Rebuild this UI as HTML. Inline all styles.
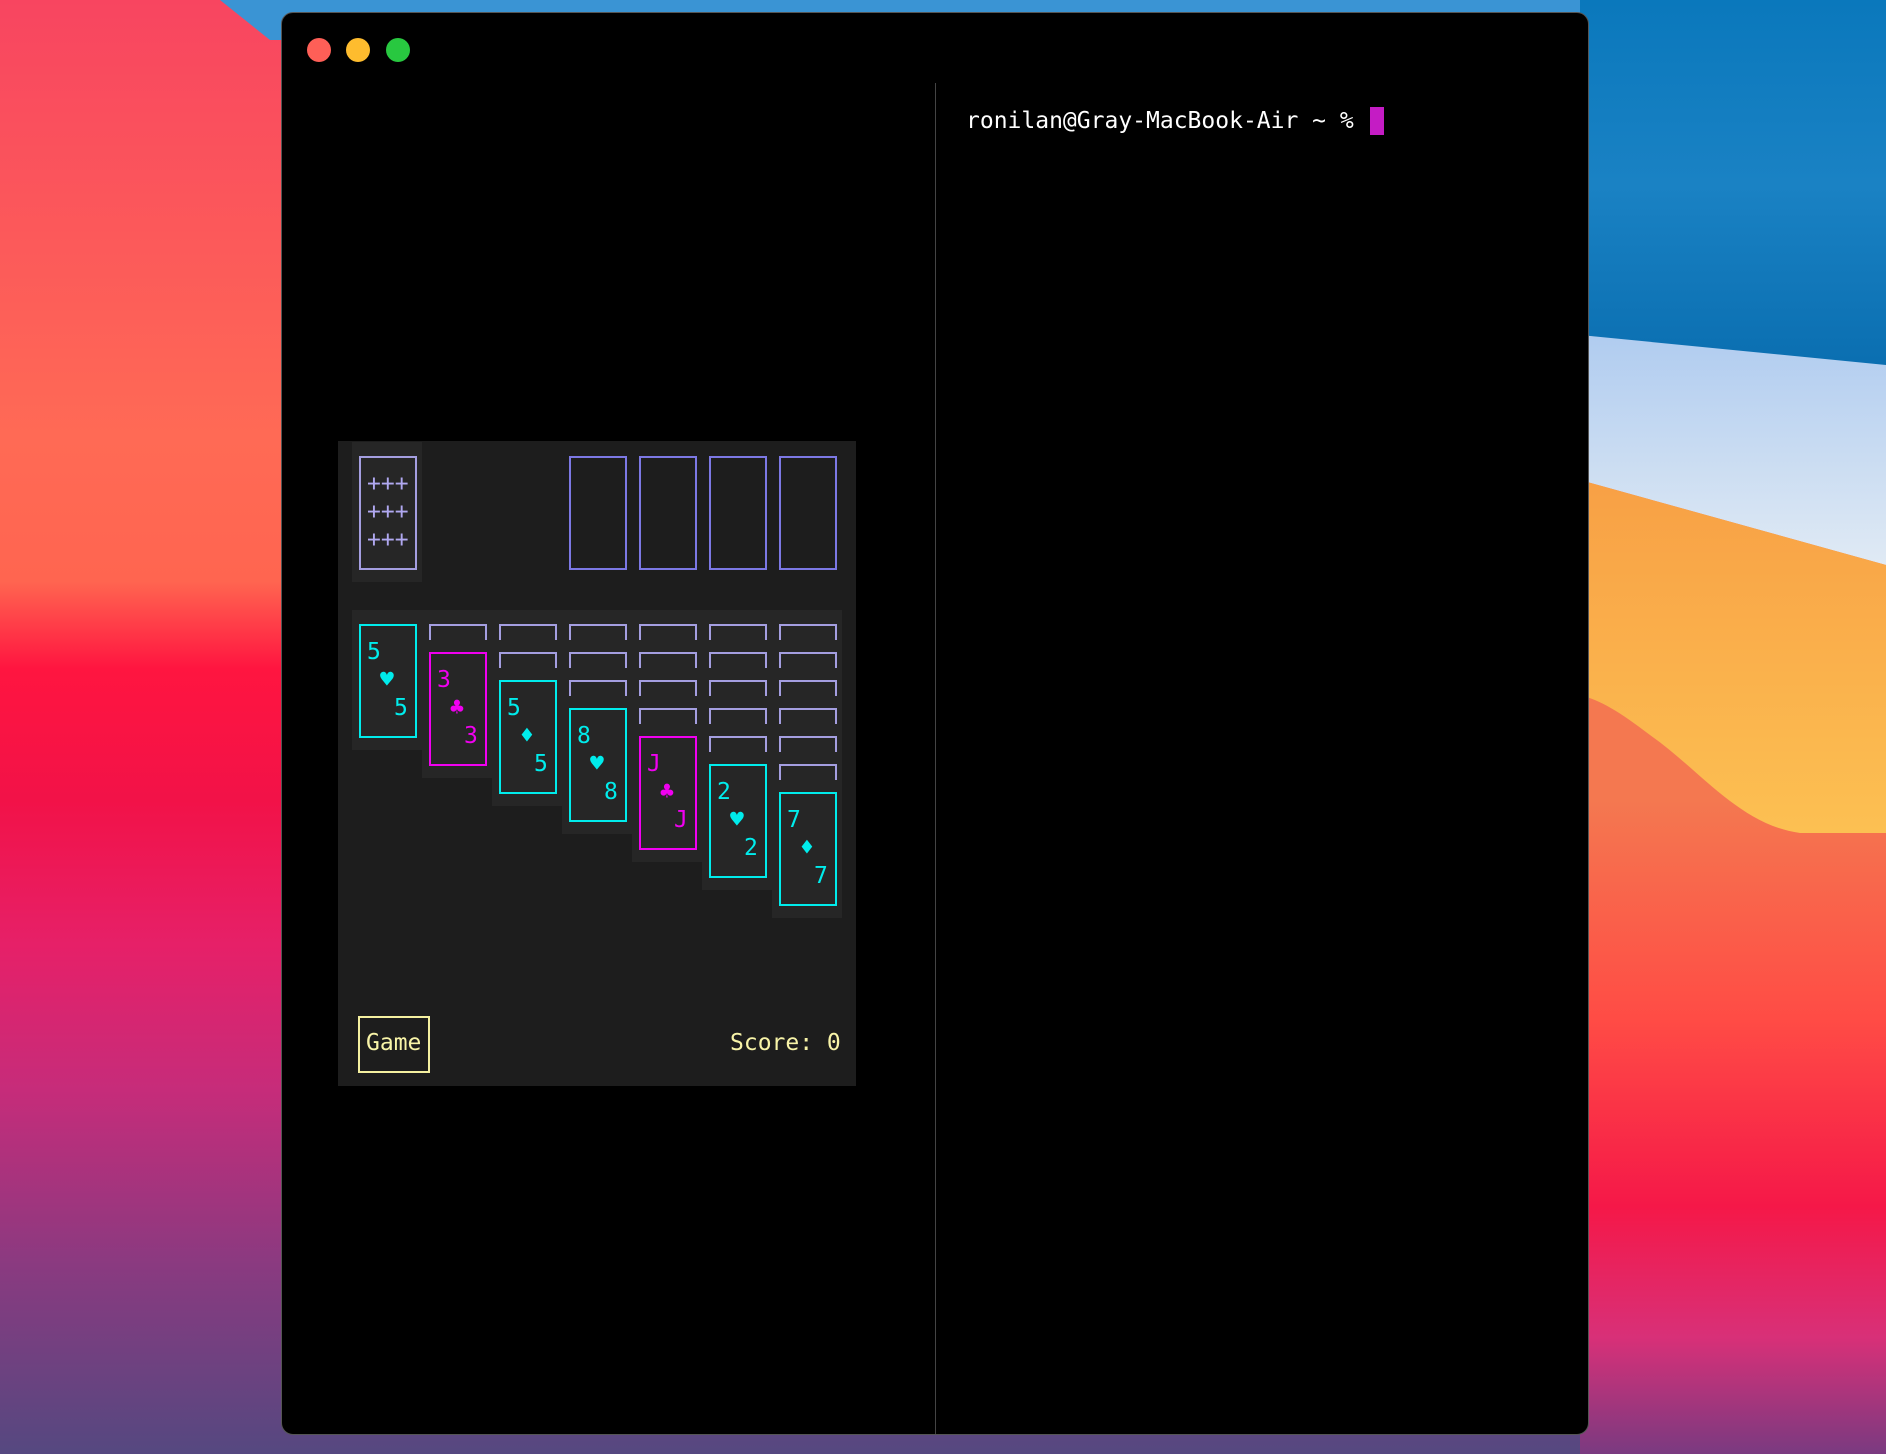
<!DOCTYPE html>
<html><head><meta charset="utf-8"><style>
*{margin:0;padding:0;box-sizing:border-box}
body{width:1886px;height:1454px;position:relative;overflow:hidden;background:#000;font-family:"DejaVu Sans Mono","Liberation Mono",monospace}
.abs{position:absolute}
.win{position:absolute;left:281px;top:12px;width:1308px;height:1423px;background:#000;border-radius:12px;border:1px solid #555;overflow:hidden}
.dot{position:absolute;width:24px;height:24px;border-radius:50%;top:25px}
.panel{position:absolute;left:338px;top:441px;width:518px;height:645px;background:#1d1d1d}
.bg2{position:absolute;background:#262626}
.card{position:absolute;width:58px;height:114px;border:2px solid}
.stub{position:absolute;width:58px;height:16px;border:2px solid #a49ee0;border-bottom:none}
.t{position:absolute;font-size:23px;line-height:28px;height:28px}
.cy{color:#00ecec;border-color:#00ecec}
.mg{color:#f000f0;border-color:#f000f0}
</style></head><body>
<svg class="abs" style="left:0;top:0" width="1886" height="1454">
<defs>
<linearGradient id="L" x1="0" y1="0" x2="0" y2="1">
<stop offset="0" stop-color="#f84560"/><stop offset="0.3" stop-color="#ff6a55"/><stop offset="0.4" stop-color="#ff6550"/><stop offset="0.46" stop-color="#ff1540"/><stop offset="0.55" stop-color="#f21248"/><stop offset="0.65" stop-color="#e62068"/><stop offset="0.75" stop-color="#c62c7a"/><stop offset="0.87" stop-color="#8a3a80"/><stop offset="1" stop-color="#554880"/></linearGradient>
<linearGradient id="R" x1="0" y1="0" x2="0" y2="1">
<stop offset="0" stop-color="#f07a50"/><stop offset="0.55" stop-color="#f47850"/><stop offset="0.7" stop-color="#ff4c45"/><stop offset="0.83" stop-color="#f51848"/><stop offset="0.92" stop-color="#d83078"/><stop offset="1" stop-color="#7a3a80"/></linearGradient>
<linearGradient id="B" x1="0" y1="0" x2="0" y2="1"><stop offset="0" stop-color="#0a78bc"/><stop offset="0.5" stop-color="#1a82c4"/><stop offset="1" stop-color="#0a6eb0"/></linearGradient>
<linearGradient id="LB" x1="0" y1="0" x2="0" y2="1"><stop offset="0" stop-color="#b0ccf0"/><stop offset="1" stop-color="#e0eaf4"/></linearGradient>
<linearGradient id="O" x1="0" y1="0" x2="0" y2="1"><stop offset="0" stop-color="#f8a045"/><stop offset="1" stop-color="#fcc052"/></linearGradient>
</defs>
<rect width="1886" height="1454" fill="url(#L)"/>
<polygon points="220,0 1886,0 1886,40 270,40" fill="#3a94d4"/>
<rect x="1580" y="0" width="306" height="1454" fill="url(#R)"/>
<polygon points="1580,0 1886,0 1886,370 1580,335" fill="url(#B)"/>
<polygon points="1580,335 1886,365 1886,565 1580,480" fill="url(#LB)"/>
<path d="M1580,480 L1886,565 L1886,833 L1800,833 C1740,825 1700,770 1650,735 C1620,712 1600,700 1580,695 Z" fill="url(#O)"/>
</svg>
<div class="win">
<div class="dot" style="left:25px;background:#fe5f57"></div>
<div class="dot" style="left:64px;background:#febc2e"></div>
<div class="dot" style="left:104px;background:#28c840"></div>
<div class="abs" style="left:653px;top:70px;width:1px;height:1360px;background:#444"></div>
<div class="abs" style="left:684px;top:94px;font-size:23px;line-height:28px;color:#fff;white-space:pre">ronilan@Gray-MacBook-Air ~ %</div>
<div class="abs" style="left:1088px;top:94px;width:14px;height:28px;background:#c41cc4"></div>
</div>
<div class="panel"></div>
<div class="bg2" style="left:352px;top:442px;width:70px;height:140px"></div>
<div class="card" style="left:359px;top:456px;border-color:#a49ee0"></div>
<div class="t" style="left:367px;top:470px;color:#b0a8f0">+++</div>
<div class="t" style="left:367px;top:498px;color:#b0a8f0">+++</div>
<div class="t" style="left:367px;top:526px;color:#b0a8f0">+++</div>
<div class="card" style="left:569px;top:456px;border-color:#7c78e4"></div>
<div class="card" style="left:639px;top:456px;border-color:#7c78e4"></div>
<div class="card" style="left:709px;top:456px;border-color:#7c78e4"></div>
<div class="card" style="left:779px;top:456px;border-color:#7c78e4"></div>
<div class="bg2" style="left:352px;top:610px;width:70px;height:140px"></div>
<div class="bg2" style="left:422px;top:610px;width:70px;height:168px"></div>
<div class="bg2" style="left:492px;top:610px;width:70px;height:196px"></div>
<div class="bg2" style="left:562px;top:610px;width:70px;height:224px"></div>
<div class="bg2" style="left:632px;top:610px;width:70px;height:252px"></div>
<div class="bg2" style="left:702px;top:610px;width:70px;height:280px"></div>
<div class="bg2" style="left:772px;top:610px;width:70px;height:308px"></div>
<div class="stub" style="left:429px;top:624px"></div>
<div class="stub" style="left:499px;top:624px"></div><div class="stub" style="left:499px;top:652px"></div>
<div class="stub" style="left:569px;top:624px"></div><div class="stub" style="left:569px;top:652px"></div><div class="stub" style="left:569px;top:680px"></div>
<div class="stub" style="left:639px;top:624px"></div><div class="stub" style="left:639px;top:652px"></div><div class="stub" style="left:639px;top:680px"></div><div class="stub" style="left:639px;top:708px"></div>
<div class="stub" style="left:709px;top:624px"></div><div class="stub" style="left:709px;top:652px"></div><div class="stub" style="left:709px;top:680px"></div><div class="stub" style="left:709px;top:708px"></div><div class="stub" style="left:709px;top:736px"></div>
<div class="stub" style="left:779px;top:624px"></div><div class="stub" style="left:779px;top:652px"></div><div class="stub" style="left:779px;top:680px"></div><div class="stub" style="left:779px;top:708px"></div><div class="stub" style="left:779px;top:736px"></div><div class="stub" style="left:779px;top:764px"></div>
<div class="card cy" style="left:359px;top:624px"></div>
<div class="t cy" style="left:367px;top:638px">5</div><div class="t cy" style="left:380px;top:666px">♥</div><div class="t cy" style="left:394px;top:694px">5</div>
<div class="card mg" style="left:429px;top:652px"></div>
<div class="t mg" style="left:437px;top:666px">3</div><div class="t mg" style="left:450px;top:694px">♣</div><div class="t mg" style="left:464px;top:722px">3</div>
<div class="card cy" style="left:499px;top:680px"></div>
<div class="t cy" style="left:507px;top:694px">5</div><div class="t cy" style="left:520px;top:722px">♦</div><div class="t cy" style="left:534px;top:750px">5</div>
<div class="card cy" style="left:569px;top:708px"></div>
<div class="t cy" style="left:577px;top:722px">8</div><div class="t cy" style="left:590px;top:750px">♥</div><div class="t cy" style="left:604px;top:778px">8</div>
<div class="card mg" style="left:639px;top:736px"></div>
<div class="t mg" style="left:647px;top:750px">J</div><div class="t mg" style="left:660px;top:778px">♣</div><div class="t mg" style="left:674px;top:806px">J</div>
<div class="card cy" style="left:709px;top:764px"></div>
<div class="t cy" style="left:717px;top:778px">2</div><div class="t cy" style="left:730px;top:806px">♥</div><div class="t cy" style="left:744px;top:834px">2</div>
<div class="card cy" style="left:779px;top:792px"></div>
<div class="t cy" style="left:787px;top:806px">7</div><div class="t cy" style="left:800px;top:834px">♦</div><div class="t cy" style="left:814px;top:862px">7</div>
<div class="abs" style="left:358px;top:1016px;width:72px;height:57px;border:2px solid #f4f0a0"></div>
<div class="t" style="left:366px;top:1029px;color:#f8f4a8">Game</div>
<div class="t" style="left:730px;top:1029px;color:#f8f4a8;white-space:pre">Score: 0</div>
</body></html>
